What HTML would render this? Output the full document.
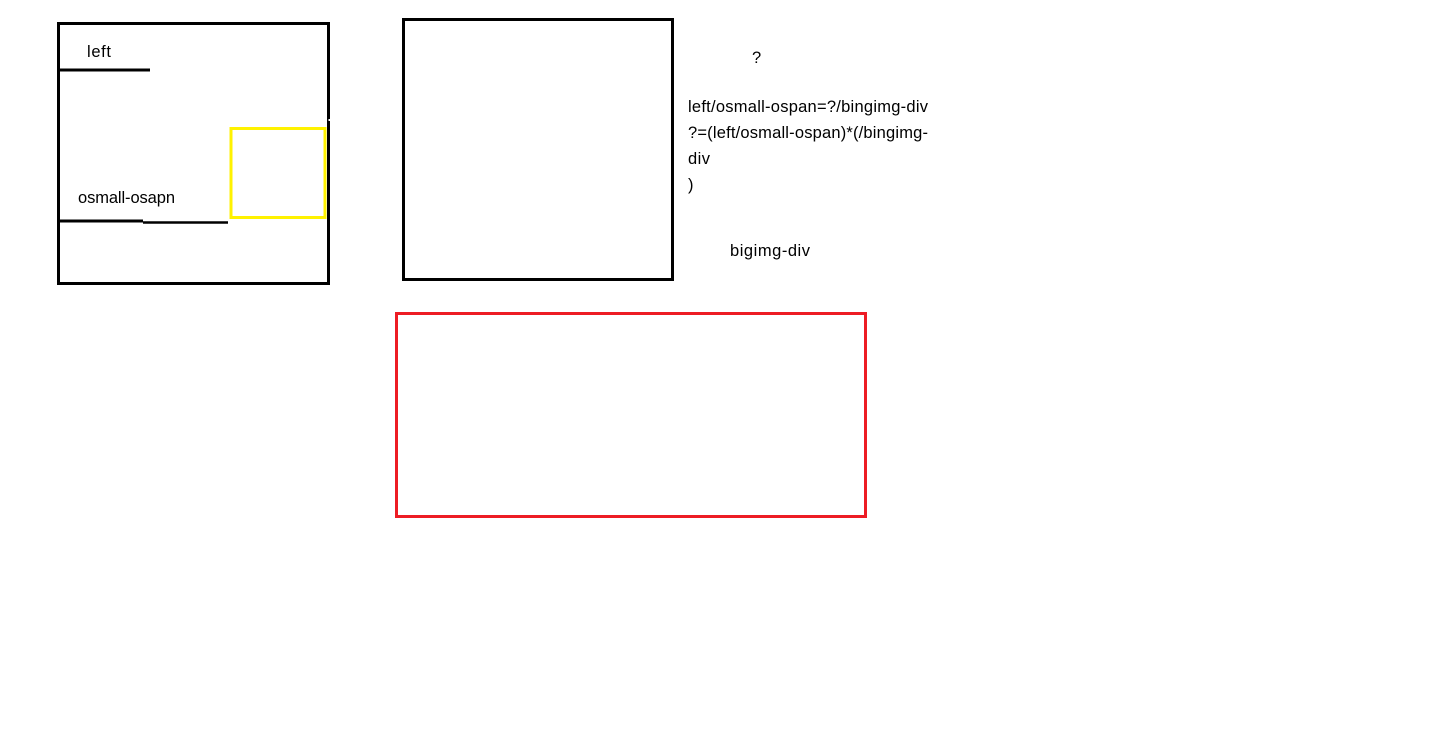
<!DOCTYPE html>
<html><head><meta charset="utf-8"><style>
html,body{margin:0;padding:0;background:#fff;width:1434px;height:737px;overflow:hidden}
svg text{font-family:"Liberation Sans",sans-serif;font-size:16.5px;fill:#000}
</style></head><body>
<svg width="1434" height="737" xmlns="http://www.w3.org/2000/svg">
<rect x="58.5" y="23.5" width="270" height="260" fill="none" stroke="#000" stroke-width="3"/>
<rect x="328.5" y="119" width="2" height="2" fill="#fff"/>
<line x1="59" y1="70" x2="150" y2="70" stroke="#000" stroke-width="3"/>
<line x1="59" y1="221" x2="143" y2="221" stroke="#000" stroke-width="3"/>
<line x1="143" y1="222.5" x2="228" y2="222.5" stroke="#000" stroke-width="2.5"/>
<rect x="231" y="128.5" width="94" height="89" fill="none" stroke="#fff200" stroke-width="3"/>
<text x="87" y="57" textLength="24">left</text>
<text x="78" y="203" textLength="97">osmall-osapn</text>
<rect x="403.5" y="19.5" width="269" height="260" fill="none" stroke="#000" stroke-width="3"/>
<rect x="396.5" y="313.5" width="469" height="203" fill="none" stroke="#ed1c24" stroke-width="3"/>
<text x="752" y="63">?</text>
<text x="688" y="112" textLength="240">left/osmall-ospan=?/bingimg-div</text>
<text x="688" y="138" textLength="240">?=(left/osmall-ospan)*(/bingimg-</text>
<text x="688" y="164" textLength="22">div</text>
<text x="688" y="190">)</text>
<text x="730" y="256" textLength="80">bigimg-div</text>
</svg>
</body></html>
